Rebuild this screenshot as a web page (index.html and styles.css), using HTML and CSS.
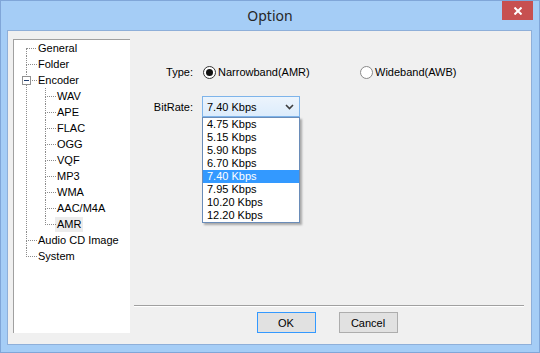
FILE: index.html
```html
<!DOCTYPE html>
<html>
<head>
<meta http-equiv="Content-Type" content="text/html; charset=utf-8"/>
<title>Option</title>
<link rel="stylesheet" href="styles.css">
</head>
<body>
<div class="window">
  <div class="titlebar">
    <div class="title">Option</div>
    <div class="close">
      <svg width="8" height="8" viewBox="0 0 8 8"><path d="M0.5 0.5L7.5 7.5M7.5 0.5L0.5 7.5" stroke="#fff" stroke-width="2"/></svg>
    </div>
  </div>

  <div class="client">
    <div class="tree">
      <ul class="root">
        <li><span class="label">General</span></li>
        <li><span class="label">Folder</span></li>
        <li>
          <span class="expander"></span>
          <span class="label">Encoder</span>
          <ul class="sub">
            <li><span class="label">WAV</span></li>
            <li><span class="label">APE</span></li>
            <li><span class="label">FLAC</span></li>
            <li><span class="label">OGG</span></li>
            <li><span class="label">VQF</span></li>
            <li><span class="label">MP3</span></li>
            <li><span class="label">WMA</span></li>
            <li><span class="label">AAC/M4A</span></li>
            <li><span class="label"><span class="selected">AMR</span></span></li>
          </ul>
        </li>
        <li><span class="label">Audio CD Image</span></li>
        <li><span class="label">System</span></li>
      </ul>
    </div>

    <div class="panel">
      <div class="form">
        <div class="field-label">Type:</div>
        <div class="radios">
          <label class="radio"><span class="dot checked"></span>Narrowband(AMR)</label>
          <label class="radio"><span class="dot"></span>Wideband(AWB)</label>
        </div>

        <div class="field-label bitrate">BitRate:</div>
        <div class="combo">
          <span class="combo-text">7.40 Kbps</span>
          <svg class="chevron" width="9" height="6" viewBox="0 0 9 6"><path d="M1 1L4.5 4.5L8 1" fill="none" stroke="#3d3d3d" stroke-width="1.6"/></svg>
          <ul class="dropdown">
            <li>4.75 Kbps</li>
            <li>5.15 Kbps</li>
            <li>5.90 Kbps</li>
            <li>6.70 Kbps</li>
            <li class="active">7.40 Kbps</li>
            <li>7.95 Kbps</li>
            <li>10.20 Kbps</li>
            <li>12.20 Kbps</li>
          </ul>
        </div>
      </div>

      <div class="separator"></div>

      <div class="buttons">
        <button class="btn default">OK</button>
        <button class="btn">Cancel</button>
      </div>
    </div>
  </div>
</div>
</body>
</html>
```

FILE: styles.css
```css
html, body {
  margin: 0;
  padding: 0;
}

body {
  font-family: "Liberation Sans", Arial, sans-serif;
  font-size: 11px;
  color: #000;
  background: #a5cdf6;
}

.window {
  width: 540px;
  height: 353px;
  box-sizing: border-box;
  border: 1px solid #80a6d8;
  background: #a5cdf6;
  display: flex;
  flex-direction: column;
}

/* title bar */
.titlebar {
  height: 29px;
  display: grid;
  grid-template-columns: 1fr auto 1fr;
}

.title {
  grid-column: 2;
  font-family: "Noto Sans", "Open Sans", sans-serif;
  font-size: 14px;
  line-height: 29px;
  color: #262626;
}

.close {
  grid-column: 3;
  justify-self: end;
  align-self: start;
  width: 31px;
  height: 19px;
  margin-right: 6px;
  background: #c75050;
  display: flex;
  align-items: center;
  justify-content: center;
}

/* client area */
.client {
  flex: 1;
  margin: 0 7px 7px 6px;
  border: 1px solid #8eafd9;
  background: #f0f0f0;
  padding: 8px 7px 11px 5px;
  display: flex;
  gap: 4px;
}

/* tree */
.tree {
  width: 116px;
  background: #fff;
  border-style: solid;
  border-width: 1px 0 0 1px;
  border-color: #a0a0a0;
}

.tree ul {
  list-style: none;
  margin: 0;
  padding: 0;
}

.tree .root {
  margin-left: 12px;
}

.tree .sub {
  margin-left: 7px;
}

.tree li {
  position: relative;
  padding-left: 12px;
}

.tree li::before {
  content: '';
  position: absolute;
  left: 0;
  top: 0;
  width: 10px;
  height: 8px;
  border-left: 1px dotted #8c8c8c;
  border-bottom: 1px dotted #8c8c8c;
}

.tree .root > li:first-child::before {
  border-left: none;
}

.tree li:not(:last-child)::after {
  content: '';
  position: absolute;
  left: 0;
  top: 8px;
  bottom: 0;
  border-left: 1px dotted #8c8c8c;
}

.tree .label {
  display: block;
  height: 16px;
  line-height: 16px;
  white-space: nowrap;
}

.tree .selected {
  display: inline-block;
  background: #ececec;
  line-height: 15px;
  padding: 0 2px;
  margin-left: -2px;
}

.expander {
  position: absolute;
  left: -4px;
  top: 4px;
  width: 7px;
  height: 7px;
  border: 1px solid #919191;
  background: #fff;
  z-index: 1;
}

.expander::after {
  content: '';
  position: absolute;
  left: 1px;
  top: 3px;
  width: 5px;
  height: 1px;
  background: #1e3c6e;
}

/* right panel */
.panel {
  flex: 1;
  display: flex;
  flex-direction: column;
}

.form {
  flex: 1;
  display: grid;
  grid-template-columns: 45px auto;
  grid-template-rows: 14px 21px;
  column-gap: 9px;
  row-gap: 17px;
  align-content: start;
  align-items: center;
  padding: 26px 0 0 14px;
}

.field-label {
  text-align: right;
  white-space: nowrap;
}

.radios {
  display: grid;
  grid-template-columns: 157px auto;
  padding-left: 1px;
}

.radio {
  display: flex;
  align-items: center;
  gap: 2px;
  white-space: nowrap;
}

.dot {
  width: 11px;
  height: 11px;
  border: 1px solid #8a8a8a;
  border-radius: 50%;
  background: #fff;
  display: flex;
  align-items: center;
  justify-content: center;
}

.dot.checked {
  border-color: #333;
}

.dot.checked::after {
  content: '';
  width: 7px;
  height: 7px;
  border-radius: 50%;
  background: #111;
}

.combo {
  position: relative;
  width: 87px;
  height: 19px;
  border: 1px solid #7eb4ea;
  background: linear-gradient(#ecf4fc, #dcecfc);
  display: flex;
  align-items: center;
  justify-content: space-between;
  padding: 0 5px 0 4px;
}

.chevron {
  display: block;
}

.dropdown {
  position: absolute;
  left: -1px;
  top: 20px;
  width: 96px;
  margin: 0;
  padding: 0;
  list-style: none;
  background: #fff;
  border: 1px solid #6a8cb8;
  box-shadow: 2px 2px 2px rgba(0, 0, 0, 0.3);
  z-index: 2;
}

.dropdown li {
  height: 13px;
  line-height: 13px;
  padding-left: 4px;
  white-space: nowrap;
}

.dropdown li.active {
  background: #3399ff;
  color: #fff;
}

.separator {
  height: 0;
  border-top: 1px solid #a0a0a0;
  border-bottom: 1px solid #fff;
}

.buttons {
  display: flex;
  justify-content: center;
  gap: 23px;
  padding: 5px 4px 0 0;
}

.btn {
  width: 59px;
  height: 21px;
  font-family: "Liberation Sans", Arial, sans-serif;
  font-size: 11px;
  color: #000;
  background: #e1e1e1;
  border: 1px solid #adadad;
  padding: 0;
}

.btn.default {
  border-color: #3399ff;
}
```
